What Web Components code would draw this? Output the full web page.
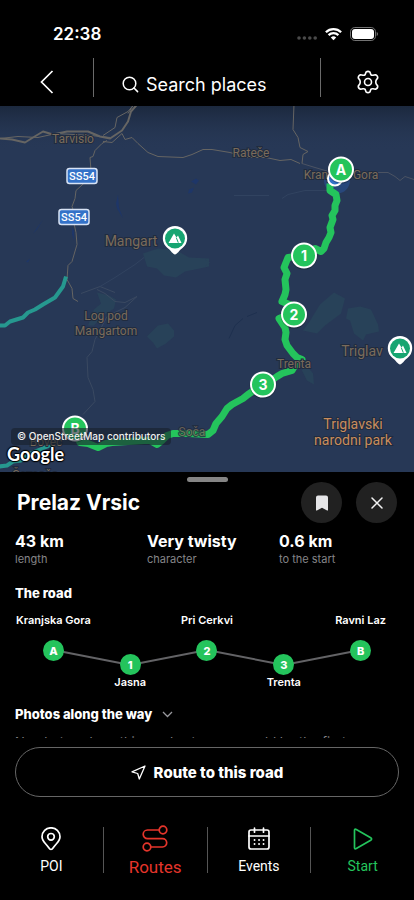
<!DOCTYPE html>
<html lang="en">
<head>
<meta charset="utf-8">
<meta name="viewport" content="width=device-width, initial-scale=1">
<title>Prelaz Vrsic</title>
<style>
  body { margin: 0; background: #000; color: #fff; font-family: Inter, "Liberation Sans", sans-serif; }
</style>
</head>
<body>
<ride-app></ride-app>
<script>
const define = (name, html) => customElements.define(name, class extends HTMLElement {
  connectedCallback() {
    if (this.shadowRoot) return;
    this.attachShadow({ mode: 'open' }).innerHTML =
      '<style>*{box-sizing:border-box}button,a{font:inherit;color:inherit;background:none;border:0;padding:0;margin:0;text-decoration:none}svg{display:block}</style>' +
      (typeof html === 'function' ? html(this) : html);
  }
});

define('status-bar', `
<style>
  :host { display: flex; align-items: center; justify-content: space-between; height: 58px; padding: 10px 36px 0 53px; font-size: 17px; font-weight: 600; }
  .icons { display: flex; align-items: center; gap: 8px; }
</style>
<time>22:38</time>
<div class="icons">
  <svg width="20" height="14" viewBox="0 0 20 14" fill="#4a4a4a"><circle cx="2" cy="11" r="1.8"/><circle cx="7.4" cy="11" r="1.8"/><circle cx="12.8" cy="11" r="1.8"/><circle cx="18.2" cy="11" r="1.8"/></svg>
  <svg width="17" height="14" viewBox="0 0 17 14" fill="none" stroke="#fff" stroke-width="2.3"><path d="M.9 5.2a10.8 10.8 0 0 1 15.2 0M3.6 8.1a7 7 0 0 1 9.8 0"/><path d="M8.500 13.200 5.800 10.500a3.900 3.900 0 0 1 5.400 0z" fill="#fff" stroke="none"/></svg>
  <svg width="28" height="14" viewBox="0 0 28 14"><rect x=".5" y=".5" width="25" height="13" rx="4.300" fill="none" stroke="#737373"/><rect x="2" y="2" width="22" height="10" rx="3" fill="#fff"/><path d="M26.700 5v4q1.300-.6 1.300-2t-1.300-2" fill="#737373"/></svg>
</div>`);

define('search-header', `
<style>
  :host { display: grid; grid-template-columns: 93px 1fr 93px; height: 48px; padding-bottom: 9px; }
  button { display: flex; align-items: center; justify-content: center; }
  .search { border: solid #6a6a6a; border-width: 0 1px; justify-content: flex-start; gap: 7px; padding: 14px 0 0 28px; font-size: 18px; white-space: nowrap; }
  .back, .gear { padding-top: 8px; }
</style>
<button class="back" aria-label="Back"><svg width="14" height="24" viewBox="0 0 14 24" fill="none" stroke="#fff" stroke-width="1.700"><path d="M12.500 1 1.500 12l11 11"/></svg></button>
<button class="search"><svg width="17" height="17" viewBox="0 0 17 17" fill="none" stroke="#fff" stroke-width="1.500" stroke-linecap="round"><circle cx="7.500" cy="7.500" r="6.300"/><path d="m12 12 3.600 3.600"/></svg><span>Search places</span></button>
<button class="gear" aria-label="Settings"><svg width="24" height="24" viewBox="0 0 24 24" fill="none" stroke="#fff" stroke-width="1.600" stroke-linejoin="round"><path d="M10 2.200Q12 .400 14 2.200L14.800 4.600Q15.700 5.500 17 5.200L19.400 4.700Q21.900 5.500 21.700 8L20.100 10.300Q19.500 12 20.100 13.700L21.700 16Q21.900 18.500 19.400 19.300L17 18.800Q15.700 18.500 14.800 19.400L14 21.800Q12 23.600 10 21.800L9.200 19.400Q8.300 18.500 7 18.800L4.600 19.300Q2.100 18.500 2.300 16L3.900 13.700Q4.500 12 3.900 10.300L2.300 8Q2.100 5.500 4.600 4.700L7 5.200Q8.300 5.500 9.200 4.600Z"/><circle cx="12" cy="12" r="3.500"/></svg></button>`);

const stop = (x, y, t) => `<g transform="translate(${x} ${y})"><circle r="13.300" fill="#000" opacity=".25" cy=".8"/><circle r="12" fill="#24c45c" stroke="#fff" stroke-width="2"/><text y="5" class="stop">${t}</text></g>`;
const peak = (x, y) => `<g transform="translate(${x} ${y})"><path d="M0 16C-2 16-4 12-8 9A12.200 12.200 0 1 1 8 9C4 12 2 16 0 16Z" fill="#fff"/><circle r="10" fill="#16a571"/><path d="M-6.500 4.500-1-5 1.500-1 3-3 6.500 4.500Z" fill="#fff"/><path d="m1.300-.8 2 5" stroke="#16a571" stroke-width="1"/></g>`;
const shield = (x, y) => `<g transform="translate(${x} ${y})"><rect x="-15" y="-7.500" width="30" height="15" rx="2.500" fill="#3472c8" stroke="#d8e3f5" stroke-width="1.500"/><text y="4" class="shield">SS54</text></g>`;

define('route-map', `
<style>
  :host { display: block; position: relative; overflow: hidden; background: #273856; min-height: 0; }
  .canvas { position: absolute; inset: 0; width: 100%; height: 100%; }
  text { text-anchor: middle; fill: #7a6b5b; font-family: Roboto, sans-serif; font-size: 12px; stroke: #202b3e; stroke-width: 2px; paint-order: stroke; }
  .stop { fill: #fff; stroke: none; font: 700 14px Inter, sans-serif; }
  .shield { fill: #fff; stroke: none; font-size: 11px; font-weight: 500; }
  .park { fill: #c98d5c; font-size: 14px; }
  .big { font-size: 14px; }
  .credit { position: absolute; left: 11px; bottom: 27px; padding: 0 6px; border-radius: 4px; background: rgba(24,32,44,.6); font-size: 10px; font-weight: 500; line-height: 17px; color: #eee; white-space: nowrap; }
  .google { position: absolute; left: 7px; bottom: 7px; font: 700 18px/21px Lato, sans-serif; text-shadow: 0 0 2px #000, 1px 0 1px #000, -1px 0 1px #000, 0 1px 1px #000, 0 -1px 1px #000; }
</style>
<svg class="canvas" viewBox="0 106 414 367" preserveAspectRatio="xMidYMid slice" role="img" aria-label="Route from Kranjska Gora to Ravni Laz">
  <defs><linearGradient id="shade" x2="0" y2="1"><stop stop-color="#1b283d"/><stop offset="1" stop-color="#273856" stop-opacity="0"/></linearGradient></defs>
  <rect y="106" width="414" height="45" fill="url(#shade)"/>
  <g fill="#284259">
    <path d="m143 254 15-5 17 1 14 8 20 1v8l-14 3-10 2-9 6-12-2-7-7-10-2Z"/>
    <path d="m97 293 12 3 7 4-2 9-12 8-8 9-6 0 6-16 7-6Z"/>
    <path d="M147 337 158 326 168 324 174 331 174 337 166 344 157 349 153 343Z"/>
    <path d="m320 305 14-12 11 6-4 15-16 12-8 8-14-3 6-8Z"/>
    <path d="m348 309 12-2 11 3 7 15 1 7-13 3-3 6-9-7-4-13-4-2Z"/>
    <path d="m305 364 8 10 1 11-7-4-5-10Z"/><path d="m205 260 5 3-5 4Z"/>
  </g>
  <g fill="#1e3668"><path d="m118 195 1 13 4 11-6-10-1-5ZM191 182l5-3 3 2-3 4ZM189 190l5-2-2 5-4 1ZM26 262l4-3-2 4ZM72 228l2 3v10l-2-6ZM33 234l10-14-6 10Z"/></g>
  <g fill="none" stroke="#3a4961" stroke-width="1">
    <path d="m81 294 19-7 15 6M97 290l8 4 10 8 10 1 12-6-12 11-18 9-12 23-3 12-5 6 1 20 5 12 2 12-12 13"/>
    <path d="m100 287 15-9 20-13 9-7M234 196l35 0M282 199l6-4 17-4 22 0" stroke="#314360"/><path d="M229 339l6-13 8-7M247 317l10-4" stroke="#1e304f"/>
  </g>
  <g fill="none" stroke="#666563" stroke-linejoin="round">
    <path d="m0 139 12 1 13 3 8-5 10-6 10 3 14-3 21 0 12 5 10 2 12-8 6-9 3-10 7-8" stroke-width="2"/>
    <path d="m0 139 18-2 20 1 18-4 35 2 19 2M103 136l12-8 2-10 11-6 5-6M128 114l5-8"/>
    <path d="m103 142 9 1 10-9 3 6 7-2 6 6 10 9 10 4 25 1 9-3 11-5 9 0 18 3 18 5 18 0 14 3 11-1 9 4"/>
    <path d="m302 164 13 4 17 5M378 173l10 0 7 4 5 4 5-4 9 3" stroke="#4b5363"/>
    <path d="m294 105-1 25 5 8 2 10 8 4-5 3-1 9M107 141l-5 3-7 7-2 6-3 1 1 13-4 10-11 10-1 8-3 8 1 3-1 5 4 18 1 12-5 17-4 4-1 14 5 9 1 10 5 3"/>
  </g>
  <g fill="none" stroke="#26988f" stroke-width="4" stroke-linejoin="round">
    <path d="m66 277-3 10-8 11-12 7-8 5-7 3-5 5-13 4-5 4-6 0M-1 467l8-1 6-4 8-1 9-7 10-4 17-7"/>
  </g>
  <circle cx="337" cy="181" r="13" fill="#29539b" opacity=".55"/>
  <text x="341" y="179">Kranjska Gora</text>
  <path fill="none" stroke="#24c45c" stroke-width="7" stroke-linejoin="round" d="M330 184V191L336 195 337 201 335 206V211L332 216 333 220 330 228 331 233 329 238 326 243 324 249 321 252 315 249 304 256 288 258 284 268 287 274 285 280 286 290 285 295 282 302 292 306 294 313 279 319 285 328 286 333 285 340 287 346 293 354 297 358 302 360 295 366 292 371 282 374 277 377 270 382 263 385 248 395 243 399 232 405 227 409 222 417 216 424 213 431 208 435 188 434 173 434 167 436 162 441 157 445 150 441 144 441 112 443 106 444 98 448 88 444 80 443 75 430"/>
  <text x="192" y="436" opacity=".8">Soča</text>
  <text x="73" y="143">Tarvisio</text><text x="251" y="157">Rateče</text>
  <text x="131" y="246" class="big">Mangart</text>
  <text x="106" y="320">Log pod</text><text x="106" y="335">Mangartom</text>
  <text x="294" y="368">Trenta</text><text x="362" y="356" class="big">Triglav</text>
  <text x="353" y="429" class="park">Triglavski</text><text x="353" y="445" class="park">narodni park</text>
  <text x="46" y="446">Bovec</text><text x="35" y="479">Čezsoča</text>
  ${shield(82, 176.5)}${shield(74, 217.5)}${peak(175, 239)}${peak(400, 349)}
  <circle cx="335" cy="179" r="7" fill="#3472c8" stroke="#fff" stroke-width="2"/>
  ${stop(341, 170, 'A')}${stop(304, 256, '1')}${stop(294, 315, '2')}${stop(263, 385, '3')}${stop(75, 429, 'B')}
</svg>
<span class="credit">© OpenStreetMap contributors</span>
<span class="google">Google</span>`);

define('round-button', el => `
<style>
  :host { display: block; }
  button { display: grid; place-items: center; width: 41px; height: 41px; border-radius: 50%; background: #212121; }
</style>
<button aria-label="${el.getAttribute('label')}"><slot></slot></button>`);

define('route-stat', `
<style>
  :host { display: block; }
  .value { font-size: 16px; font-weight: 700; line-height: 20px; }
  .label { font-size: 11px; line-height: 17px; color: #858588; }
</style>
<div class="value"><slot></slot></div><div class="label"><slot name="label"></slot></div>`);

define('road-stop', el => `
<style>
  :host { display: flex; flex-direction: column; align-items: center; font-size: 11px; font-weight: 600; line-height: 14px; white-space: nowrap; }
  b { display: grid; place-items: center; width: 21px; height: 21px; border-radius: 50%; background: #24c45c; font-weight: 800; }
  :host(:not([low])) b { margin-top: 13px; }
  :host([low]) { padding-top: 41px; flex-direction: column-reverse; justify-content: flex-end; }
</style>
<span><slot></slot></span><b>${el.getAttribute('mark')}</b>`);

define('road-profile', `
<style>
  :host { display: grid; grid-template-columns: repeat(5, 1fr); position: relative; isolation: isolate; height: 76px; }
  svg { position: absolute; z-index: -1; left: 0; top: 37px; width: 100%; height: 15px; overflow: visible; }
</style>
<svg viewBox="0 0 100 15" preserveAspectRatio="none" fill="none" stroke="#636366" stroke-width="2"><path vector-effect="non-scaling-stroke" d="M10 0 30 15 50 0 70 15 90 0"/></svg>
<slot></slot>`);

define('route-sheet', `
<style>
  :host { display: block; background: #000; padding: 5px 15px 0; }
  .handle { display: block; width: 41px; height: 5px; margin: 0 auto; border-radius: 3px; background: #858585; }
  header { display: flex; align-items: center; gap: 14px; padding: 0 2px; }
  h1 { flex: 1; margin: 0; font-size: 21px; font-weight: 700; }
  .content { height: 215px; overflow: hidden; }
  .stats { display: grid; grid-template-columns: repeat(3, 1fr); gap: 12px; padding-top: 8px; }
  h2 { margin: 0; font-size: 13px; font-weight: 800; line-height: 18px; }
  .road { padding: 16px 0 11px; }
  .photos { display: flex; align-items: center; gap: 10px; padding-top: 16px; }
  p { margin: 10px 0 0; font-size: 13px; line-height: 18px; color: #858588; white-space: nowrap; }
  .go { display: flex; align-items: center; justify-content: center; gap: 8px; width: 100%; height: 50px; margin-top: 9px; border: 1px solid #666; border-radius: 25px; font-size: 15px; font-weight: 800; }
</style>
<span class="handle"></span>
<header>
  <h1>Prelaz Vrsic</h1>
  <round-button label="Save"><svg width="12" height="16" viewBox="0 0 12 16" fill="#e5e5e7"><path d="M0 2.500Q0 .5 2 .5h8q2 0 2 2V15q0 .9-.9.5L6 12.800.9 15.500Q0 15.900 0 15Z"/></svg></round-button>
  <round-button label="Close"><svg width="12" height="12" viewBox="0 0 12 12" fill="none" stroke="#f2f2f2" stroke-width="1.500" stroke-linecap="round"><path d="m1 1 10 10M11 1 1 11"/></svg></round-button>
</header>
<div class="content">
  <div class="stats">
    <route-stat>43 km<span slot="label">length</span></route-stat>
    <route-stat>Very twisty<span slot="label">character</span></route-stat>
    <route-stat>0.6 km<span slot="label">to the start</span></route-stat>
  </div>
  <h2 class="road">The road</h2>
  <road-profile>
    <road-stop mark="A">Kranjska Gora</road-stop>
    <road-stop mark="1" low>Jasna</road-stop>
    <road-stop mark="2">Pri Cerkvi</road-stop>
    <road-stop mark="3" low>Trenta</road-stop>
    <road-stop mark="B">Ravni Laz</road-stop>
  </road-profile>
  <h2><button class="photos" aria-expanded="true">Photos along the way <svg width="11" height="7" viewBox="0 0 11 7" fill="none" stroke="#98989d" stroke-width="1.300"><path d="m1 1 4.500 4.500L10 1"/></svg></button></h2>
  <p>No photos along this road yet — you could be the first</p>
</div>
<button class="go"><svg width="15" height="15" viewBox="0 0 15 15" fill="none" stroke="#fff" stroke-width="1.300" stroke-linejoin="round"><path d="M14 1 1 6.800l5.700 1.700L8.300 14Z"/></svg>Route to this road</button>`);

define('nav-item', `
<style>
  :host { display: block; flex: 1 1 0; font: 14px/16px Roboto, "Liberation Sans", sans-serif; }
  :host(:not(:last-of-type)) { border-right: 1px solid #555; }
  :host([active]) { color: #e5352b; font-size: 17px; }
  :host([start]) { color: #24c45c; }
  a { display: flex; flex-direction: column; align-items: center; justify-content: center; gap: 7px; height: 46px; }
  ::slotted(svg) { flex: none; }
</style>
<a href="#"><slot name="icon"></slot><span><slot></slot></span></a>`);

define('tab-bar', `
<style>
  :host { display: flex; padding: 30px 0 27px; background: #000; }
  svg { display: block; fill: none; stroke: currentColor; stroke-width: 1.700; stroke-linecap: round; stroke-linejoin: round; }
</style>
<nav-item><svg slot="icon" width="20" height="24" viewBox="0 0 20 24"><path d="M10 22.500Q8.800 22.500 7.600 20.500C5 16.500 1 14.500 1 9.800a9 9 0 0 1 18 0c0 4.700-4 6.700-6.600 10.700Q11.200 22.500 10 22.500Z"/><circle cx="10" cy="9.800" r="3.300"/></svg>POI</nav-item>
<nav-item active><svg slot="icon" width="26" height="27" viewBox="0 0 26 27"><circle cx="21" cy="5" r="3.800"/><circle cx="5" cy="22" r="3.800"/><path d="M17 5H5.500a4.300 4.300 0 0 0 0 8.600H20.500a4.200 4.200 0 0 1 0 8.400H9"/></svg>Routes</nav-item>
<nav-item><svg slot="icon" width="22" height="24" viewBox="0 0 22 24"><rect x="1" y="3" width="20" height="19" rx="2"/><path d="M1 9h20M6.500 1.200v4M15.500 1.200v4"/><path d="M6.500 13h.1M11 13h.1M15.500 13h.1M6.500 17h.1M11 17h.1M15.500 17h.1" stroke-width="1.800"/></svg>Events</nav-item>
<nav-item start><svg slot="icon" width="20" height="24" viewBox="0 -1 20 24"><path d="M1.500 2.500Q1.500.5 3.300 1.500L17.700 9.700Q19.500 11 17.700 12.300L3.300 20.500Q1.500 21.500 1.500 19.500Z"/></svg>Start</nav-item>`);

define('ride-app', `
<style>
  :host { display: flex; flex-direction: column; min-height: 100vh; background: #000; }
  route-map { flex: 1 1 320px; }
</style>
<status-bar></status-bar>
<search-header></search-header>
<route-map></route-map>
<route-sheet></route-sheet>
<tab-bar></tab-bar>`);
</script>
</body>
</html>
